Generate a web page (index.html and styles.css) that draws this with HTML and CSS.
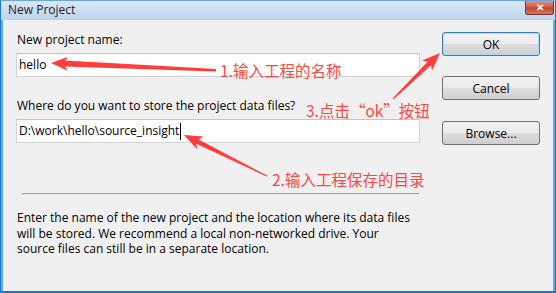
FILE: index.html
```html
<!DOCTYPE html>
<html lang="en">
<head>
    <meta charset="UTF-8">
    <meta name="viewport" content="width=device-width, initial-scale=1.0">
    <title>New Project</title>
    <link rel="stylesheet" href="styles.css">
</head>
<body>
    <div class="window">
        <div class="title-bar">
            <span class="title">New Project</span>
            <span class="close-btn">&#x2715;</span>
        </div>
        <div class="client">
            <div class="fields">
                <label class="field-label" for="projectName">New project name:</label>
                <div class="text-box" id="projectName">hello</div>

                <label class="field-label second" for="projectDir">Where do you want to store the project data files?</label>
                <div class="text-box" id="projectDir">D:\work\hello\source_insight<span class="caret"></span></div>

                <hr class="separator">

                <p class="description">
                    Enter the name of the new project and the location where its data files<br>
                    will be stored. We recommend a local non-networked drive. Your<br>
                    source files can still be in a separate location.
                </p>
            </div>
            <div class="buttons">
                <button class="btn btn-default">OK</button>
                <button class="btn btn-cancel">Cancel</button>
                <button class="btn btn-browse">Browse...</button>
            </div>
        </div>

        <!-- red annotations drawn over the dialog -->
        <svg class="arrows" width="556" height="293" viewBox="0 0 556 293">
            <polygon points="51,63 68.3,56.7 65.1,60.6 216,69 216,71.5 64.9,66.6 67.7,70.7" />
            <polygon points="184,135 203.3,136.6 198.6,139.4 267.2,175.6 266.8,176.6 196.4,143.8 197.1,149.2" />
            <polygon points="440,53 432,70.6 431,65.3 393.4,99.4 392.6,98.6 427.6,61.7 422.2,60.6" />
        </svg>
        <span class="note note-1">1.输入工程的名称</span>
        <span class="note note-2">2.输入工程保存的目录</span>
        <span class="note note-3">3.点击“ok”按钮</span>
    </div>
</body>
</html>
```

FILE: styles.css
```css
body {
    margin: 0;
    font-family: "Open Sans", "Noto Sans", sans-serif;
    font-size: 12px;
    color: #000;
}

.window {
    position: relative;
    width: 556px;
    height: 293px;
    box-sizing: border-box;
    border-left: 1px solid #1979ca;
    border-right: 1px solid #1979ca;
    border-bottom: 2px solid #1979ca;
    border-top: 1px solid #6aa6dc;
    background-color: #5ea9e6;
    padding: 0 2px 2px 2px;
    overflow: hidden;
}

.title-bar {
    height: 19px;
    display: flex;
    align-items: flex-start;
    justify-content: space-between;
    background: linear-gradient(to bottom, #dbe7f4, #bcd3ec);
    margin: 0 -2px;
    padding: 0 1px 0 7px;
}

.title {
    font-size: 12px;
    line-height: 17px;
    color: #1e1e1e;
}

.close-btn {
    width: 29px;
    height: 15px;
    margin-top: -1px;
    box-sizing: border-box;
    border: 1px solid #6b3a35;
    border-top: none;
    border-radius: 0 0 3px 3px;
    background: linear-gradient(to bottom, #e6a190, #cb5a45 50%, #c24a35 60%, #d4785f);
    color: #fff;
    font-size: 10px;
    font-weight: bold;
    line-height: 14px;
    text-align: center;
}

.client {
    display: flex;
    gap: 22px;
    height: 272px;
    box-sizing: border-box;
    background-color: #f0f0f0;
    padding: 12px 0 0 13px;
}

.fields {
    display: flex;
    flex-direction: column;
    width: 404px;
}

.field-label {
    display: block;
    line-height: 16px;
    padding-left: 1px;
}

.field-label.second {
    margin-top: 21px;
}

.text-box {
    height: 24px;
    box-sizing: border-box;
    margin-top: 5px;
    padding: 0 2px;
    border: 1px solid #d3d3d3;
    border-top-color: #c4c4c4;
    background-color: #fff;
    line-height: 22px;
    display: flex;
    align-items: center;
}

.caret {
    display: inline-block;
    width: 1px;
    height: 17px;
    margin-left: 1px;
    background-color: #000;
}

.separator {
    border: none;
    border-top: 1px solid #a0a0a0;
    margin: 50px 1px 0 6px;
}

.description {
    margin: 16px 0 0 1px;
    line-height: 15.5px;
}

.buttons {
    display: flex;
    flex-direction: column;
}

.btn {
    width: 98px;
    height: 24px;
    font-family: inherit;
    font-size: 12px;
    color: #000;
    border: 1px solid #707070;
    border-radius: 3px;
    background: linear-gradient(to bottom, #f2f2f2, #ebebeb 50%, #dddddd 51%, #cfcfcf);
    padding: 0;
}

.btn-default {
    border-color: #3c7fb1;
    box-shadow: inset 0 0 0 1px #a8dbf7;
}

.btn-cancel {
    margin-top: 20px;
}

.btn-browse {
    margin-top: 21px;
}

.arrows {
    position: absolute;
    left: -1px;
    top: -1px;
    fill: #ff3d3d;
    pointer-events: none;
}

.note {
    position: absolute;
    font-family: "Noto Sans CJK SC", "Open Sans", sans-serif;
    font-size: 15.5px;
    line-height: 18px;
    color: #ff4646;
    white-space: nowrap;
}

.note-1 {
    left: 219px;
    top: 60px;
}

.note-2 {
    left: 271px;
    top: 169px;
}

.note-3 {
    left: 305px;
    top: 100px;
}
```
